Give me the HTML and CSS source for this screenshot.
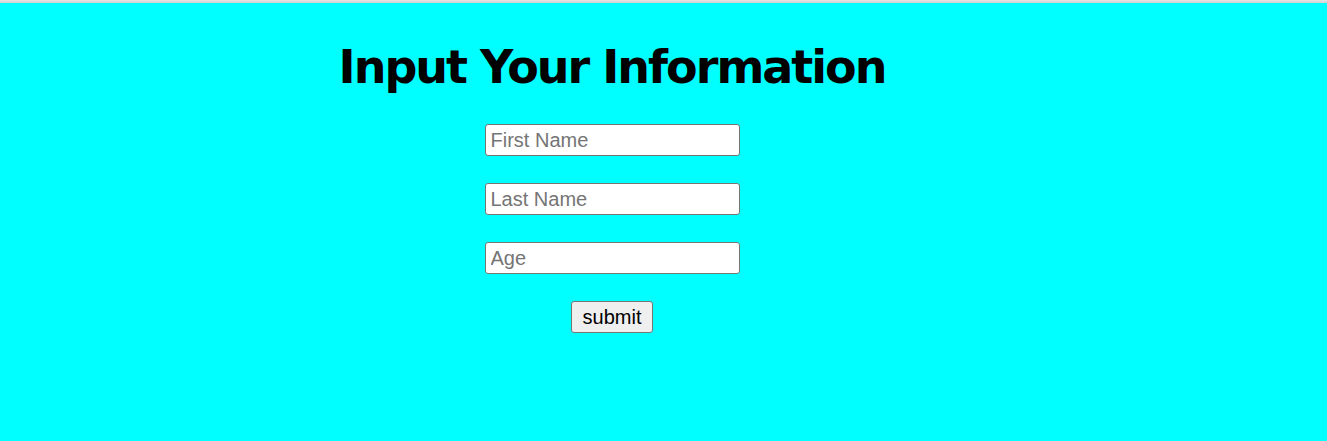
FILE: index.html
```html
<!DOCTYPE html>
<html>
<head>
<meta charset="utf-8">
<link rel="stylesheet" href="styles.css">
</head>
<body>
<div class="topline"></div>
<main class="page">
  <h1 class="title">Input Your Information</h1>
  <form class="form">
    <input class="field" type="text" placeholder="First Name">
    <input class="field" type="text" placeholder="Last Name">
    <input class="field" type="text" placeholder="Age">
    <button class="submit" type="button">submit</button>
  </form>
</main>
</body>
</html>
```
FILE: styles.css
```css
html, body {
  margin: 0;
  padding: 0;
  background: #00ffff;
  height: 100%;
}
.topline {
  height: 3px;
  background: linear-gradient(#e4e4e4, #d0d0d0);
}
.page {
  width: 1224px;
  display: flex;
  flex-direction: column;
  align-items: center;
}
.title {
  font-family: "Comic Sans MS", "DejaVu Sans", sans-serif;
  font-weight: bold;
  font-size: 46px;
  letter-spacing: -2px;
  color: #000;
  margin: 36px 0 0 0;
  height: 85px;
  line-height: 56px;
}
.form {
  display: flex;
  flex-direction: column;
  align-items: center;
  gap: 27px;
}
.field {
  box-sizing: border-box;
  width: 255px;
  height: 32px;
  border: 1px solid #767676;
  border-radius: 3px;
  padding: 1px 5px;
  font-family: "Liberation Sans", Arial, sans-serif;
  font-size: 20px;
  background: #fff;
  margin: 0;
}
.field::placeholder {
  color: #757575;
}
.submit {
  box-sizing: border-box;
  width: 82px;
  height: 32px;
  border: 1px solid #767676;
  border-radius: 3px;
  background: #efefef;
  font-family: "Liberation Sans", Arial, sans-serif;
  font-size: 20px;
  color: #000;
  padding: 0 6px;
  margin: 0;
}
```
